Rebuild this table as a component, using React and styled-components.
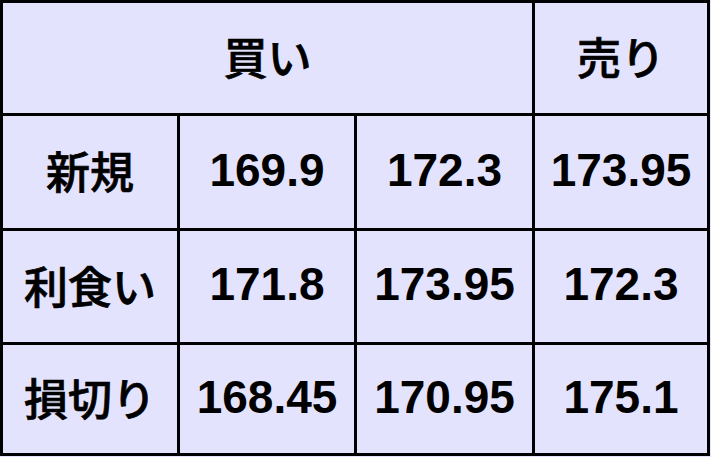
import React from 'react'
import styled, { createGlobalStyle } from 'styled-components'

const GlobalStyle = createGlobalStyle`
  html, body {
    margin: 0;
    padding: 0;
    background: #e3e3fd;
  }
`

const rows = [
  { label: '新規', values: ['169.9', '172.3', '173.95'] },
  { label: '利食い', values: ['171.8', '173.95', '172.3'] },
  { label: '損切り', values: ['168.45', '170.95', '175.1'] },
]

const Table = styled.div`
  display: grid;
  grid-template-columns: 174px 174px 175px 172px;
  grid-template-rows: 110px 112px 111px 108px;
  gap: 3px;
  padding: 3px;
  width: max-content;
  background: #000;
`

const Cell = styled.div`
  display: flex;
  align-items: center;
  justify-content: center;
  padding-bottom: ${props => (props.kanji ? '4px' : '5px')};
  background: #e3e3fd;
  color: #000;
  grid-column: ${props => (props.span ? `span ${props.span}` : 'auto')};
  font-family: ${props =>
    props.kanji
      ? '"Noto Sans CJK JP", "Liberation Sans", sans-serif'
      : '"Liberation Sans", Arial, sans-serif'};
  font-weight: ${props => (props.kanji ? 500 : 700)};
  -webkit-text-stroke: ${props => (props.kanji ? '0.7px #000' : '0')};
  font-size: ${props => (props.kanji ? '44px' : '46px')};
  line-height: 1;
`

const App = () => {
  return (
    <>
      <GlobalStyle />
      <Table>
        <Cell kanji span={3}>買い</Cell>
        <Cell kanji>売り</Cell>
        {rows.map(row => (
          <React.Fragment key={row.label}>
            <Cell kanji>{row.label}</Cell>
            {row.values.map((v, i) => (
              <Cell key={i}>{v}</Cell>
            ))}
          </React.Fragment>
        ))}
      </Table>
    </>
  )
}

export default App
